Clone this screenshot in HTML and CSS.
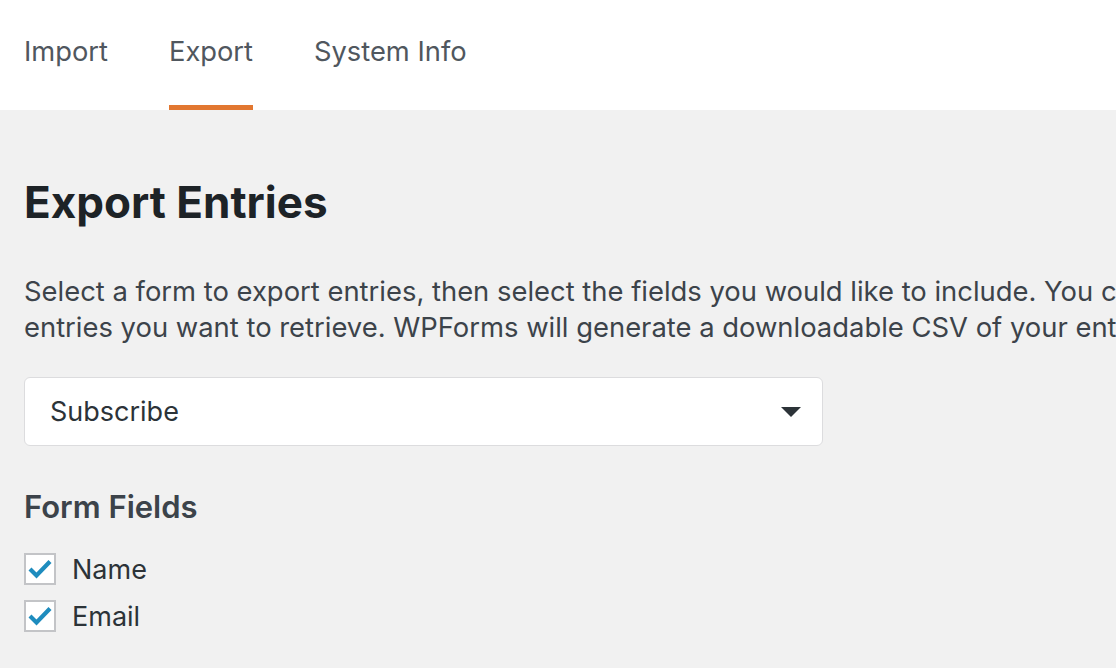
FILE: index.html
```html
<!DOCTYPE html>
<html lang="en">
<head>
<meta charset="utf-8">
<link rel="stylesheet" href="styles.css">
</head>
<body>
<nav class="tabs">
  <a class="tab">Import</a>
  <a class="tab active">Export</a>
  <a class="tab">System Info</a>
</nav>
<main class="content">
  <h1 class="title">Export Entries</h1>
  <p class="intro">
    <span class="intro-line">Select a form to export entries, then select the fields you would like to include. You ca</span>
    <span class="intro-line">entries you want to retrieve. WPForms will generate a downloadable CSV of your entr</span>
  </p>
  <div class="select">
    <span class="select-value">Subscribe</span>
    <svg class="select-arrow" width="20" height="10" viewBox="0 0 20 10"><path d="M0 0h20L10 10z" fill="#2c3338"/></svg>
  </div>
  <h2 class="section">Form Fields</h2>
  <ul class="fields">
    <li class="field">
      <span class="checkbox"><svg width="24" height="20" viewBox="0 0 24 20"><path d="M2 10l6.5 6.5L22 2.5" fill="none" stroke="#1e8cbe" stroke-width="4.2"/></svg></span>
      <span class="label">Name</span>
    </li>
    <li class="field">
      <span class="checkbox"><svg width="24" height="20" viewBox="0 0 24 20"><path d="M2 10l6.5 6.5L22 2.5" fill="none" stroke="#1e8cbe" stroke-width="4.2"/></svg></span>
      <span class="label">Email</span>
    </li>
  </ul>
</main>
</body>
</html>
```
FILE: styles.css
```css
html, body {
  margin: 0;
  padding: 0;
}
body {
  background: #f1f1f1;
  font-family: Inter, "Liberation Sans", sans-serif;
  color: #3c434a;
  overflow: hidden;
  width: 1116px;
  height: 668px;
}
.tabs {
  background: #fff;
  height: 110px;
  display: flex;
  gap: 61px;
  padding-left: 24px;
  box-sizing: border-box;
}
.tab {
  font-size: 27.3px;
  color: #50575e;
  height: 110px;
  box-sizing: border-box;
  padding-top: 35px;
  line-height: 34px;
  border-bottom: 5px solid transparent;
}
.tab.active {
  border-bottom-color: #e27730;
}
.content {
  padding: 64px 24px 0;
}
.title {
  margin: 0;
  font-size: 44px;
  font-weight: 700;
  color: #1d2327;
  line-height: 56px;
}
.intro {
  margin: 43px 0 0;
  font-size: 27.4px;
  line-height: 36px;
  color: #3c434a;
  display: flex;
  flex-direction: column;
  white-space: nowrap;
}
.select {
  margin-top: 32px;
  width: 799px;
  height: 69px;
  box-sizing: border-box;
  background: #fff;
  border: 1px solid #dcdcde;
  border-radius: 6px;
  display: flex;
  align-items: center;
  justify-content: space-between;
  padding: 0 21px 0 25px;
}
.select-value {
  font-size: 27px;
  color: #2c3338;
}
.select-arrow {
  display: block;
}
.section {
  margin: 41px 0 0;
  font-size: 31px;
  font-weight: 600;
  color: #3c434a;
  line-height: 40px;
}
.fields {
  list-style: none;
  margin: 26px 0 0;
  padding: 0;
  display: flex;
  flex-direction: column;
  gap: 15px;
}
.field {
  display: flex;
  align-items: center;
  gap: 16px;
  height: 32px;
}
.checkbox {
  width: 32px;
  height: 32px;
  box-sizing: border-box;
  border: 2px solid #c3c4c7;
  background: #fff;
  display: flex;
  align-items: center;
  justify-content: center;
}
.label {
  font-size: 27px;
  color: #2c3338;
}
```
